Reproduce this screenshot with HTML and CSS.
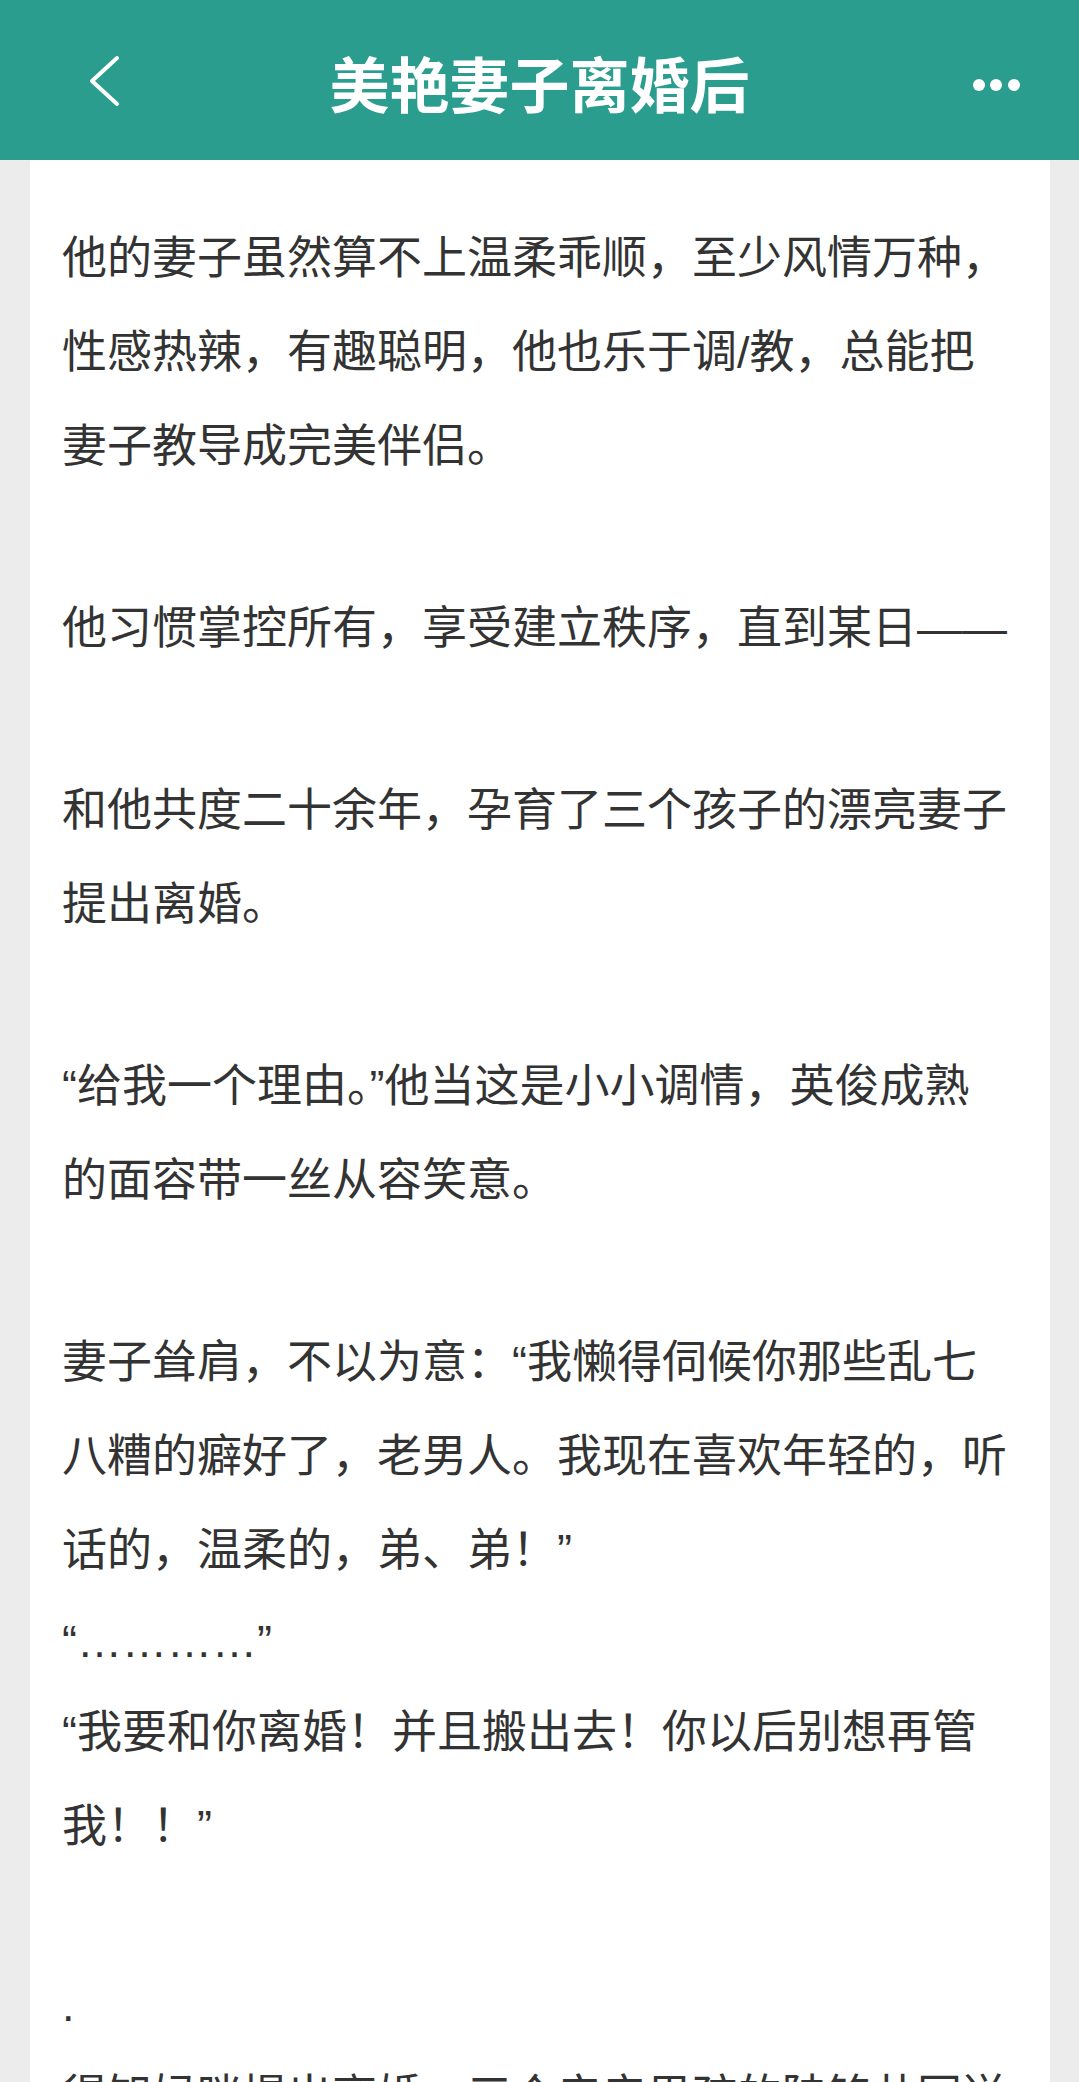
FILE: index.html
```html
<!DOCTYPE html>
<html lang="zh-CN">
<head>
<meta charset="utf-8">
<title>美艳妻子离婚后</title>
<link rel="stylesheet" href="styles.css">
</head>
<body>
<div class="page">
  <header class="topbar">
    <button class="icon-btn" aria-label="返回">
      <svg width="160" height="160" viewBox="0 0 160 160">
        <polyline points="117,58 92,81 117,104" fill="none" stroke="#fff" stroke-width="4" stroke-linecap="round" stroke-linejoin="round"/>
      </svg>
    </button>
    <h1 class="title">美艳妻子离婚后</h1>
    <button class="icon-btn" aria-label="更多">
      <svg width="160" height="160" viewBox="0 0 160 160" fill="#fff">
        <circle cx="60" cy="85" r="6"/>
        <circle cx="77" cy="85" r="6"/>
        <circle cx="95" cy="85" r="6"/>
      </svg>
    </button>
  </header>

  <main class="chapter">
    <article class="text">
      <p>他的妻子虽然算不上温柔乖顺，至少风情万种，性感热辣，有趣聪明，他也乐于调/教，总能把妻子教导成完美伴侣。</p>
      <p class="gap">他习惯掌控所有，享受建立秩序，直到某日——</p>
      <p class="gap">和他共度二十余年，孕育了三个孩子的漂亮妻子提出离婚。</p>
      <p class="gap">“给我一个理由。”他当这是小小调情，英俊成熟的面容带一丝从容笑意。</p>
      <p class="gap">妻子耸肩，不以为意：“我懒得伺候你那些乱七八糟的癖好了，老男人。我现在喜欢年轻的，听话的，温柔的，弟、弟！”</p>
      <p class="short">“…………”</p>
      <p>“我要和你离婚！并且搬出去！你以后别想再管我！！”</p>
      <p class="gap short">.</p>
      <p>得知妈咪提出离婚，三个亲亲男孩的陆铭共同送上祝福。</p>
    </article>
  </main>
</div>
</body>
</html>
```

FILE: styles.css
```css
* {
  box-sizing: border-box;
}

html,
body {
  margin: 0;
  padding: 0;
}

body {
  background: #ececec;
  font-family: "Liberation Sans", "Noto Sans CJK SC", sans-serif;
}

.page {
  min-height: 100vh;
  display: flex;
  flex-direction: column;
}

/* top navigation bar */
.topbar {
  height: 160px;
  background: #2a9d8f;
  display: grid;
  grid-template-columns: 160px 1fr 160px;
}

.icon-btn {
  border: 0;
  padding: 0;
  margin: 0;
  background: none;
  display: block;
}

.icon-btn svg {
  display: block;
}

.title {
  margin: 0;
  padding-top: 4px;
  text-align: center;
  color: #fff;
  font: 700 60px/156px "Noto Sans CJK SC", sans-serif;
}

/* reading card */
.chapter {
  flex: 1;
  margin: 0 29px 0 30px;
  background: #fff;
  padding: 52px 38px 40px 32px;
}

.text p {
  margin: 0;
  font-size: 45px;
  line-height: 94px;
  color: #333;
}

/* paragraph separated by a blank line */
.text p.gap {
  margin-top: 88px;
}

/* lines holding only latin punctuation sit a little tighter */
.text p.short {
  line-height: 88px;
}
```
